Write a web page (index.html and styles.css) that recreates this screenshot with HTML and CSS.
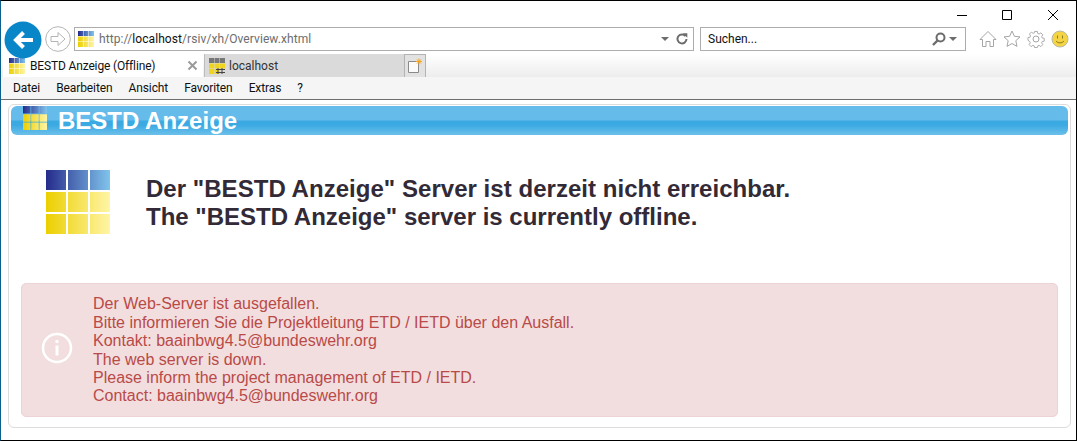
FILE: index.html
```html
<!DOCTYPE html>
<html lang="de">
<head>
<meta charset="utf-8">
<title>BESTD Anzeige (Offline)</title>
<link rel="stylesheet" href="styles.css">
</head>
<body>
<svg class="defs" width="0" height="0" aria-hidden="true">
  <defs>
    <linearGradient id="gb" x1="0" x2="1" y1="0" y2="0"><stop offset="0" stop-color="#262b8b"/><stop offset="1" stop-color="#80c4ec"/></linearGradient>
    <linearGradient id="gy" x1="0" x2="1" y1="0" y2="0"><stop offset="0" stop-color="#eccf00"/><stop offset="1" stop-color="#fff5a6"/></linearGradient>
    <symbol id="logo" viewBox="0 0 64 64">
      <path fill="url(#gb)" d="M0 0h20v20H0zM22 0h20v20H22zM44 0h20v20H44z"/>
      <path fill="url(#gy)" d="M0 22h20v20H0zM22 22h20v20H22zM44 22h20v20H44zM0 44h20v20H0zM22 44h20v20H22zM44 44h20v20H44z"/>
    </symbol>
  </defs>
</svg>
<div class="window">
  <div class="titlebar">
    <svg class="winbtn" width="11" height="11" viewBox="0 0 11 11"><path d="M0 5.500h10" stroke="#000" fill="none"/></svg>
    <svg class="winbtn" width="11" height="11" viewBox="0 0 11 11"><path d="M.5 .5h9v9h-9z" stroke="#000" fill="none"/></svg>
    <svg class="winbtn winbtn-close" width="11" height="11" viewBox="0 0 11 11"><path d="M0 0l10 10M10 0L0 10" stroke="#000" fill="none"/></svg>
  </div>
  <div class="navbar">
    <svg class="back" width="38" height="38" viewBox="0 0 38 38">
      <circle cx="19" cy="19" r="18.500" fill="#0986c8"/>
      <path d="M29 19H12M19.500 11.500L12 19l7.500 7.500" stroke="#fff" stroke-width="4" fill="none"/>
    </svg>
    <svg class="forward" width="26" height="26" viewBox="0 0 26 26">
      <circle cx="13" cy="13" r="12.300" fill="#fff" stroke="#b5b5b5"/>
      <path d="M6 10.500h7V6.500l7 6.500-7 6.500v-4H6z" fill="none" stroke="#b5b5b5"/>
    </svg>
    <div class="address">
      <svg class="fav" width="16" height="16"><use href="#logo"/></svg>
      <span class="url">http://<b>localhost</b>/rsiv/xh/Overview.xhtml</span>
      <span class="caret"></span>
      <svg class="reload" width="12" height="12" viewBox="0 0 12 12"><path d="M9.600 3.200A4.500 4.500 0 1 0 10.500 6" fill="none" stroke="#6c6c6c" stroke-width="2"/><path d="M6.800 0.200h4.500v4.500z" fill="#6c6c6c"/></svg>
    </div>
    <div class="search">
      <span class="search-text">Suchen...</span>
      <svg class="lens" width="14" height="14" viewBox="0 0 14 14"><circle cx="8.500" cy="5.500" r="4" fill="none" stroke="#6c6c6c" stroke-width="2"/><path d="M5.500 8.500L1 13" stroke="#6c6c6c" stroke-width="2.400"/></svg>
      <span class="caret"></span>
    </div>
    <div class="tools">
      <svg width="18" height="18" viewBox="0 0 18 18"><path d="M9 1.500L1 9.500h2.500v7H7v-5h4v5h3.500v-7H17z" fill="#fff" stroke="#a5a5a5"/></svg>
      <svg width="18" height="18" viewBox="0 0 18 18"><path d="M9 1l2.400 5.300 5.600.6-4.200 3.800 1.200 5.700L9 13.500l-5 2.900 1.200-5.700L1 6.900l5.600-.6z" fill="#fff" stroke="#a5a5a5"/></svg>
      <svg width="18" height="18" viewBox="0 0 18 18"><circle cx="9" cy="9" r="3" fill="none" stroke="#a5a5a5"/><path d="M7.500 1h3l.4 2.200 1.400.6 1.900-1.300 2.100 2.100-1.300 1.900.6 1.400 2.200.4v3l-2.200.4-.6 1.400 1.300 1.900-2.100 2.100-1.900-1.300-1.400.6-.4 1.700h-3l-.4-1.700-1.400-.6-1.900 1.300-2.100-2.100 1.300-1.900-.6-1.400L.5 10.500v-3l2.200-.4.600-1.400L2 3.800l2.100-2.100L6 3l1.400-.6z" fill="none" stroke="#a5a5a5" transform="translate(.5 .5) scale(.94)"/></svg>
      <svg width="18" height="18" viewBox="0 0 18 18"><circle cx="9" cy="9" r="8" fill="#f5d443" stroke="#b9b9a8"/><path d="M6.500 5.500v3M11.500 5.500v3" stroke="#8a7a20"/><path d="M5 11c2 2.500 6 2.500 8 0" fill="none" stroke="#8a7a20"/></svg>
    </div>
  </div>
  <div class="tabbar">
    <div class="tab active">
      <svg class="fav" width="16" height="16"><use href="#logo"/></svg>
      <span class="tab-title">BESTD Anzeige (Offline)</span>
      <svg class="tab-close" width="11" height="11" viewBox="0 0 11 11"><path d="M1.500 1.500l8 8M9.500 1.500l-8 8" stroke="#9a9a9a" stroke-width="2"/></svg>
    </div>
    <div class="tab inactive">
      <svg class="fav" width="16" height="16" viewBox="0 0 16 16">
        <path fill="#777" d="M0 0h5v5H0zM5.500 0h5v5h-5zM11 0h5v5h-5z"/>
        <path fill="#f0d520" d="M0 5.500h5v5H0zM5.500 5.500h5v5h-5zM11 5.500h5v5h-5zM0 11h5v5H0zM5.500 11h5v5h-5z"/>
        <path stroke="#444" fill="none" d="M9 10v6M13 10v6M7 11.500h9M7 14.500h9"/>
      </svg>
      <span class="tab-title">localhost</span>
    </div>
    <div class="tab newtab">
      <svg width="16" height="16" viewBox="0 0 16 16">
        <path d="M1.500 3.500h10v11h-10z" fill="#fbfbfb" stroke="#8a8a8a"/>
        <path d="M12 0.500v6M9 3.500h6M10 1.500l4 4M14 1.500l-4 4" stroke="#f5a623"/>
      </svg>
    </div>
  </div>
  <nav class="menubar">
    <span>Datei</span><span>Bearbeiten</span><span>Ansicht</span><span>Favoriten</span><span>Extras</span><span>?</span>
  </nav>
  <main class="page">
    <div class="panel">
      <header class="banner">
        <svg class="banner-logo" width="24" height="24"><use href="#logo"/></svg>
        <h1>BESTD Anzeige</h1>
      </header>
      <section class="message">
        <svg class="big-logo" width="64" height="64"><use href="#logo"/></svg>
        <div class="message-text">
          <p class="line-de">Der "BESTD Anzeige" Server ist derzeit nicht erreichbar.</p>
          <p>The "BESTD Anzeige" server is currently offline.</p>
        </div>
      </section>
      <section class="alert">
        <svg class="info" width="32" height="32" viewBox="0 0 32 32">
          <circle cx="16" cy="16" r="14" fill="none" stroke="#fff" stroke-width="2.500"/>
          <circle cx="16" cy="9.500" r="1.700" fill="#fff"/>
          <path d="M16 13.500v10" stroke="#fff" stroke-width="3"/>
        </svg>
        <div class="alert-text">
          Der Web-Server ist ausgefallen.<br>
          Bitte informieren Sie die Projektleitung ETD / IETD über den Ausfall.<br>
          Kontakt: baainbwg4.5@bundeswehr.org<br>
          The web server is down.<br>
          Please inform the project management of ETD / IETD.<br>
          Contact: baainbwg4.5@bundeswehr.org
        </div>
      </section>
    </div>
  </main>
</div>
</body>
</html>
```
FILE: styles.css
```css
* { box-sizing: border-box; }
html, body { margin: 0; padding: 0; }
body { width: 1077px; height: 441px; overflow: hidden; background: #fff; font-family: Roboto, "Open Sans", sans-serif; }
.defs { position: absolute; }
.window { width: 1077px; height: 441px; border: 1px solid #000; border-left-color: #0a5f8c; display: flex; flex-direction: column; background: #fff; }

.titlebar { height: 24px; margin-top: 2px; display: flex; justify-content: flex-end; align-items: flex-start; gap: 34px; padding: 7px 17px 0 0; }
.winbtn { display: block; }
.winbtn-close { margin-left: 1px; }

.navbar { height: 24px; display: flex; align-items: center; position: relative; }
.back { margin: 0 0 0 3px; flex: none; position: relative; z-index: 2; top: 1px; }
.forward { margin-left: 3px; flex: none; }
.address, .search { height: 24px; border: 1px solid #adadad; display: flex; align-items: center; background: #fff; font-size: 12px; }
.address { width: 620px; margin-left: 3px; padding: 0 5px 0 3px; color: #6d6d6d; }
.url { flex: 1; margin-left: 5px; white-space: nowrap; letter-spacing: .08px; }
.url b { font-weight: 400; color: #111; }
.caret { width: 0; height: 0; border: 4px solid transparent; border-top: 4px solid #6d6d6d; border-bottom: 0; margin-right: 7px; flex: none; }
.reload { flex: none; margin-right: 0; }
.search { width: 266px; margin-left: 6px; padding: 0 6px 0 7px; color: #111; }
.search-text { flex: 1; }
.lens { margin-right: 3px; }
.search .caret { margin-right: 2px; }
.tools { display: flex; gap: 6px; margin-left: 13px; }
.tools svg { display: block; }

.tabbar { height: 23px; margin-top: 3px; display: flex; padding-left: 2px; background: linear-gradient(#fff, #ededed); }
.tab { display: flex; align-items: center; font-size: 12px; height: 23px; }
.tab.active { width: 200px; background: #fff; padding: 0 5px 0 6px; color: #111; }
.tab.inactive { width: 200px; margin-left: 1px; background: #dadada; padding: 0 5px 0 4px; color: #333; border-left: 1px solid #bdbdbd; }
.tab-title { margin-left: 5px; flex: 1; white-space: nowrap; }
.active .tab-title { letter-spacing: -.15px; }
.inactive .tab-title { margin-left: 4px; }
.tab-close { flex: none; }
.newtab { width: 22px; border-left: 1px solid #b3b3b3; border-right: 1px solid #b3b3b3; border-top: 1px solid #b3b3b3; justify-content: center; background: #e2e2e2; }

.menubar { height: 23px; background: #f5f5f5; border-bottom: 1px solid #6e6e6e; display: flex; align-items: center; gap: 16px; padding: 0 0 0 12px; font-size: 12px; letter-spacing: -.1px; color: #111; }

.page { flex: 1; padding: 4px 5px 12px 7px; min-height: 0; }
.panel { height: 100%; border: 1px solid #dcdcdc; border-radius: 6px; padding: 0 2px; display: flex; flex-direction: column; }
.banner { height: 29px; margin-top: 1px; border-radius: 6px; display: flex; align-items: center; position: relative; background: linear-gradient(#65bbe9 0, #65bbe9 14px, #3ba9e2 15px, #3ba9e2 19px, #6cc0ea 29px); flex: none; }
.banner-logo { position: absolute; left: 12px; top: 0; }
.banner h1 { margin: 0 0 0 47px; font: 700 24px/29px "Liberation Sans", Arial, sans-serif; color: #fff; }
.message { display: flex; align-items: flex-start; padding: 35px 0 0 35px; flex: none; height: 148px; }
.big-logo { flex: none; display: block; }
.message-text { margin: 5px 0 0 36px; font: 700 24px/28px "Liberation Sans", Arial, sans-serif; color: #322a36; }
.message-text p { margin: 0; }
.line-de { letter-spacing: .036px; }
.alert { margin: 0 10px; height: 134px; background: #f2dede; border: 1px solid #ebd3d6; border-radius: 5px; display: flex; align-items: center; color: #b94a48; font: 16px/18.4px "Liberation Sans", Arial, sans-serif; }
.info { flex: none; margin: 0 19px 0 19px; position: relative; top: -2px; }
.alert-text { margin-left: 1px; padding-top: 1.2px; }
```
